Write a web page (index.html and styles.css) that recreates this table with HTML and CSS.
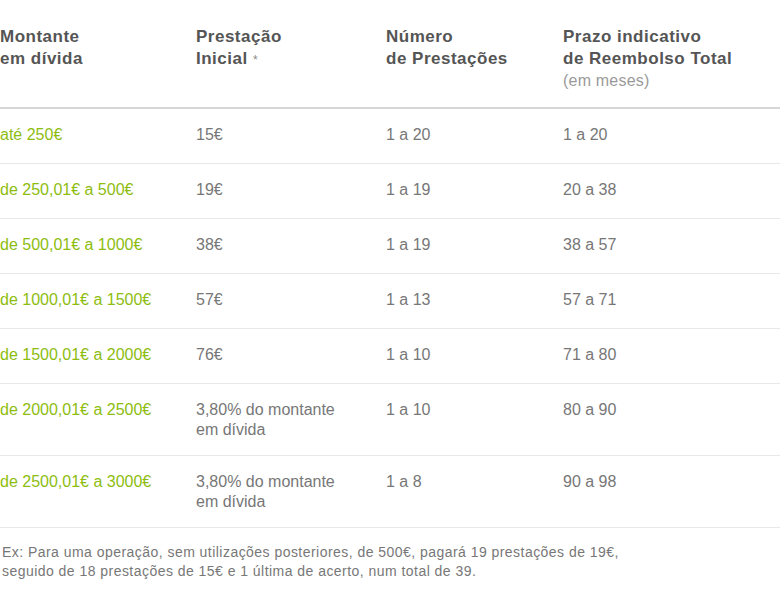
FILE: index.html
```html
<!DOCTYPE html>
<html lang="pt">
<head>
<meta charset="utf-8">
<title>Prestações</title>
<link rel="stylesheet" href="styles.css">
</head>
<body>
<table class="plan">
  <colgroup>
    <col class="c1"><col class="c2"><col class="c3"><col class="c4">
  </colgroup>
  <thead>
    <tr>
      <th>Montante<br>em dívida</th>
      <th>Prestação<br>Inicial <span class="ast">*</span></th>
      <th>Número<br>de Prestações</th>
      <th>Prazo indicativo<br>de Reembolso Total<br><span class="sub">(em meses)</span></th>
    </tr>
  </thead>
  <tbody>
    <tr><td class="amt">até 250€</td><td>15€</td><td>1 a 20</td><td>1 a 20</td></tr>
    <tr><td class="amt">de 250,01€ a 500€</td><td>19€</td><td>1 a 19</td><td>20 a 38</td></tr>
    <tr><td class="amt">de 500,01€ a 1000€</td><td>38€</td><td>1 a 19</td><td>38 a 57</td></tr>
    <tr><td class="amt">de 1000,01€ a 1500€</td><td>57€</td><td>1 a 13</td><td>57 a 71</td></tr>
    <tr><td class="amt">de 1500,01€ a 2000€</td><td>76€</td><td>1 a 10</td><td>71 a 80</td></tr>
    <tr class="tall"><td class="amt">de 2000,01€ a 2500€</td><td>3,80% do montante<br>em dívida</td><td>1 a 10</td><td>80 a 90</td></tr>
    <tr class="tall"><td class="amt">de 2500,01€ a 3000€</td><td>3,80% do montante<br>em dívida</td><td>1 a 8</td><td>90 a 98</td></tr>
  </tbody>
</table>
<p class="note">Ex: Para uma operação, sem utilizações posteriores, de 500€, pagará 19 prestações de 19€,<br>seguido de 18 prestações de 15€ e 1 última de acerto, num total de 39.</p>
</body>
</html>
```
FILE: styles.css
```css
html, body {
  margin: 0;
  padding: 0;
  background: #fff;
}
body {
  font-family: "Liberation Sans", Arial, sans-serif;
  color: #777;
  width: 780px;
}
.plan {
  width: 780px;
  border-collapse: collapse;
  table-layout: fixed;
}
.c1 { width: 196px; }
.c2 { width: 190px; }
.c3 { width: 177px; }
.c4 { width: 217px; }
.plan th {
  text-align: left;
  vertical-align: top;
  font-size: 17px;
  line-height: 22px;
  font-weight: bold;
  letter-spacing: 0.5px;
  color: #555;
  padding: 26px 0 15px 0;
  border-bottom: 2px solid #d6d6d6;
}
.ast {
  font-size: 12px;
  font-weight: normal;
  letter-spacing: 0;
  color: #8a8a8a;
  vertical-align: top;
  position: relative;
  top: 1px;
}
.sub {
  font-size: 16px;
  font-weight: normal;
  letter-spacing: 0.2px;
  color: #9a9a9a;
}
.plan td {
  vertical-align: top;
  font-size: 16px;
  line-height: 20px;
  color: #777;
  padding: 16px 0 18px 0;
  border-bottom: 1px solid #e8e8e8;
}
.plan td.amt {
  color: #8dbd0f;
}
.plan tr.tall td {
  padding: 16px 0 15px 0;
}
.note {
  margin: 0;
  padding: 15px 0 0 2px;
  font-size: 14px;
  line-height: 19px;
  letter-spacing: 0.46px;
  color: #777;
}
```
